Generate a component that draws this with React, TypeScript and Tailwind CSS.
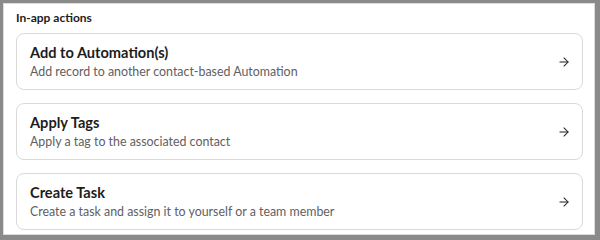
import React from 'react';
import { ArrowRight } from 'lucide-react';

const actions = [
  { title: 'Add to Automation(s)', desc: 'Add record to another contact-based Automation' },
  { title: 'Apply Tags', desc: 'Apply a tag to the associated contact' },
  { title: 'Create Task', desc: 'Create a task and assign it to yourself or a team member' },
];

export default function App() {
  return (
    <div className="w-[600px] h-[240px] bg-[#8a8a8a] pt-[3px] pl-[3px] pr-[5px] pb-[5px] font-['Lato',sans-serif]">
      <div className="h-full bg-white border border-[#dcdcdc] pl-[12px] pr-[11px] pt-[6px]">
        <h2 className="text-[12px] font-bold text-[#1d1c1d] leading-[16px] mb-[7px]">In-app actions</h2>
        <div className="flex flex-col gap-[13px]">
          {actions.map((a) => (
            <button
              key={a.title}
              className="h-[57px] w-full flex items-center justify-between rounded-[8px] border border-[#d9d9d9] pl-[13px] pr-[11px] text-left bg-white"
            >
              <div className="flex flex-col gap-[2px]">
                <span className="text-[14.6px] font-bold text-[#1d1c1d] leading-[17px]">{a.title}</span>
                <span className="text-[12.4px] text-[#616061] leading-[17px]">{a.desc}</span>
              </div>
              <ArrowRight size={14} strokeWidth={1.75} className="text-[#1d1c1d]" />
            </button>
          ))}
        </div>
      </div>
    </div>
  );
}
